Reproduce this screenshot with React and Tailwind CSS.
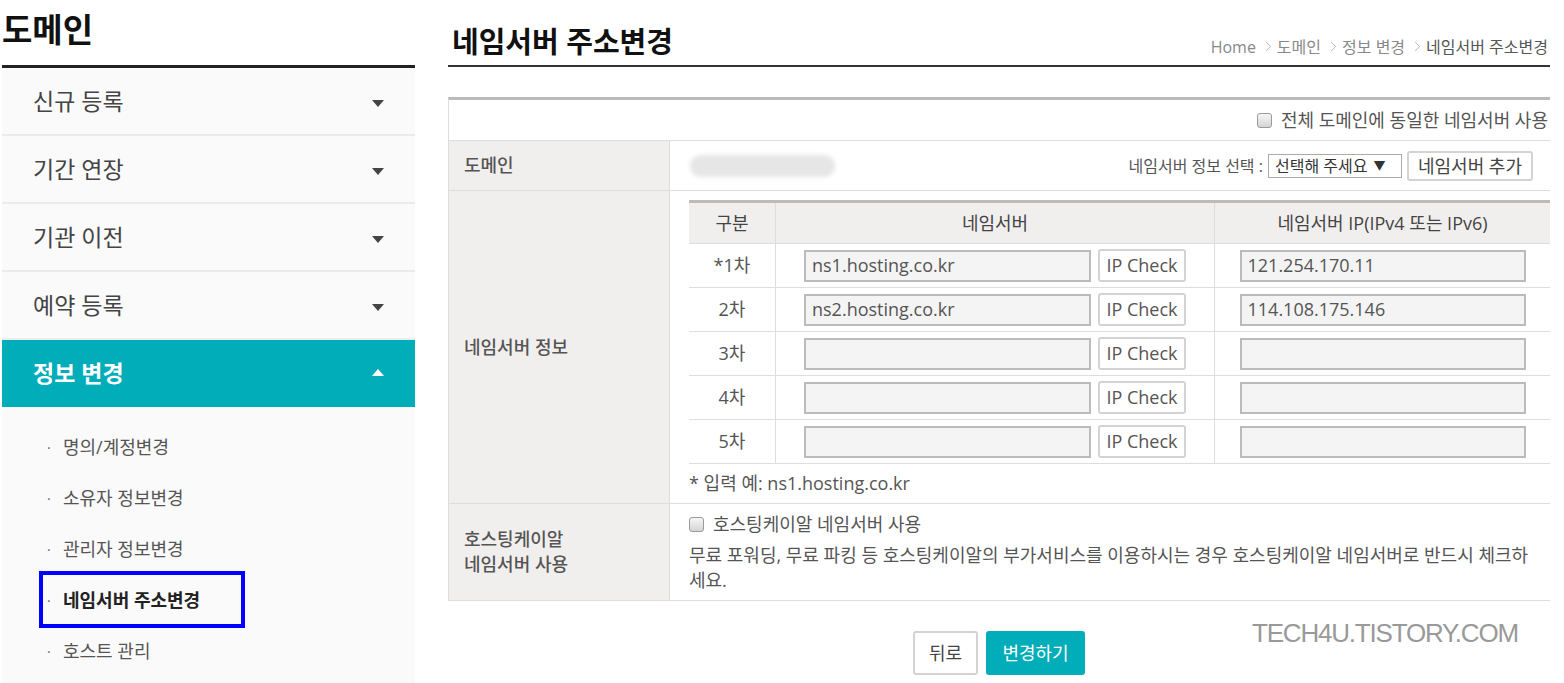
import { ChevronRight } from "lucide-react";

const menus = ["신규 등록", "기간 연장", "기관 이전", "예약 등록"];
const subMenus = ["명의/계정변경", "소유자 정보변경", "관리자 정보변경", "네임서버 주소변경", "호스트 관리"];

const rows = [
    { label: "*1차", ns: "ns1.hosting.co.kr", ip: "121.254.170.11" },
    { label: "2차", ns: "ns2.hosting.co.kr", ip: "114.108.175.146" },
    { label: "3차", ns: "", ip: "" },
    { label: "4차", ns: "", ip: "" },
    { label: "5차", ns: "", ip: "" },
];

function Checkbox() {
    return (
        <span className="inline-block w-[15px] h-[15px] rounded-[3px] border border-[#9a9a9a] bg-linear-to-b from-[#f6f6f6] to-[#d5d5d5]" />
    );
}

function Sidebar() {
    return (
        <aside className="ml-[2px] w-[413px] flex flex-col h-[683px]">
            {/* Title */}
            <div className="h-[68px] border-b-[3px] border-[#222] pt-[13px]">
                <h2 className="text-[33px] leading-none font-bold text-[#111]">도메인</h2>
            </div>

            {menus.map((m) => (
                <div
                    key={m}
                    className="h-[68px] border-b-2 border-[#ebebeb] bg-[#fafafa] flex items-center justify-between pl-[31px] pr-[31px]"
                >
                    <span className="text-[23px] text-[#444]">{m}</span>
                    <svg width="12" height="7" viewBox="0 0 12 7" className="mt-[4px]">
                        <path d="M0 0h12L6 7z" fill="#444" />
                    </svg>
                </div>
            ))}

            {/* Active menu */}
            <div className="h-[67px] bg-[#00adb9] flex items-center justify-between pl-[31px] pr-[31px]">
                <span className="text-[23px] font-bold text-white">정보 변경</span>
                <svg width="12" height="7" viewBox="0 0 12 7" className="-mt-[2px]">
                    <path d="M0 7h12L6 0z" fill="#fff" />
                </svg>
            </div>

            {/* Sub menu */}
            <div className="flex-1 bg-[#fafafa] pt-[15px]">
                {subMenus.map((s, i) => (
                    <div key={s} className="relative h-[51px] flex items-center pl-[45px]">
                        <span className="w-[16px] text-[14px] text-[#666]">·</span>
                        <span className={`text-[18px] ${i === 3 ? "font-bold text-[#222]" : "text-[#555]"}`}>
                            {s}
                        </span>
                        {i === 3 && (
                            <span className="absolute left-[37px] -top-[4px] w-[206px] h-[57px] border-4 border-[#0000ff]" />
                        )}
                    </div>
                ))}
            </div>
        </aside>
    );
}

export default function App() {
    return (
        <div className="flex bg-white w-[1564px] h-[683px] overflow-hidden font-['Open_Sans','Noto_Sans_CJK_KR',sans-serif]">
            <Sidebar />

            <main className="relative ml-[33px] w-[1102px]">
                {/* Header */}
                <div className="h-[67px] border-b-2 border-[#333] flex items-end justify-between">
                    <h1 className="text-[29px] leading-none font-semibold text-[#111] pb-[9px] pl-[4px]">
                        네임서버 주소변경
                    </h1>
                    <div className="flex items-center text-[16px] leading-none text-[#888] pb-[10px] pr-[2px]">
                        <span>Home</span>
                        <ChevronRight size={17} strokeWidth={1} className="ml-[4px] text-[#999]" />
                        <span>도메인</span>
                        <ChevronRight size={17} strokeWidth={1} className="ml-[4px] text-[#999]" />
                        <span>정보 변경</span>
                        <ChevronRight size={17} strokeWidth={1} className="ml-[4px] text-[#999]" />
                        <span className="text-[#555]">네임서버 주소변경</span>
                    </div>
                </div>

                {/* Form table */}
                <div className="mt-[30px] border-t-[3px] border-[#bbb] border-l border-l-[#ddd]">
                    {/* all domains */}
                    <div className="h-[41px] border-b border-[#ddd] flex items-center justify-end gap-[9px] pr-[2px] text-[18px] text-[#555]">
                        <Checkbox />
                        <span>전체 도메인에 동일한 네임서버 사용</span>
                    </div>

                    {/* domain */}
                    <div className="h-[50px] border-b border-[#ddd] flex">
                        <div className="w-[221px] bg-[#f1efee] border-r border-[#ddd] flex items-center pl-[15px] text-[18px] font-medium text-[#555]">
                            도메인
                        </div>
                        <div className="flex-1 flex items-center justify-between pl-[20px] pr-[17px]">
                            <div className="w-[145px] h-[22px] rounded-full bg-[#e6e6e6] blur-[2px]" />
                            <div className="flex items-center text-[16px] text-[#555]">
                                <span>네임서버 정보 선택 :</span>
                                <div className="ml-[5px] h-[24px] w-[134px] border border-[#aaa] flex items-center pl-[6px] text-[#333]">
                                    선택해 주세요 <span className="ml-[6px] text-[12px]">▼</span>
                                </div>
                                <button className="ml-[5px] h-[30px] px-[9px] border-2 border-[#d3d3d3] rounded-[3px] bg-white text-[18px] text-[#444]">
                                    네임서버 추가
                                </button>
                            </div>
                        </div>
                    </div>

                    {/* nameservers */}
                    <div className="h-[313px] border-b border-[#ddd] flex">
                        <div className="w-[221px] bg-[#f1efee] border-r border-[#ddd] flex items-center pl-[15px] text-[18px] font-medium text-[#555]">
                            네임서버 정보
                        </div>
                        <div className="flex-1 pl-[19px] pt-[9px]">
                            <div className="border-t-[3px] border-[#bbb] text-[18px] text-[#555]">
                                <div className="h-[41px] flex bg-[#f1efee] border-b border-[#ddd] text-[#444]">
                                    <div className="w-[87px] flex items-center justify-center border-r border-[#ddd]">구분</div>
                                    <div className="w-[439px] flex items-center justify-center border-r border-[#ddd]">네임서버</div>
                                    <div className="flex-1 flex items-center justify-center">네임서버 IP(IPv4 또는 IPv6)</div>
                                </div>
                                {rows.map((r) => (
                                    <div key={r.label} className="h-[44px] flex border-b border-[#ddd]">
                                        <div className="w-[87px] flex items-center justify-center border-r border-[#ddd]">
                                            {r.label}
                                        </div>
                                        <div className="w-[439px] flex items-center justify-center gap-[7px] border-r border-[#ddd]">
                                            <div className="w-[287px] h-[32px] border-2 border-[#bbb] bg-[#f4f4f4] flex items-center pl-[6px]">
                                                {r.ns}
                                            </div>
                                            <button className="w-[88px] h-[33px] border-2 border-[#d3d3d3] rounded-[3px] bg-white text-[#555]">
                                                IP Check
                                            </button>
                                        </div>
                                        <div className="flex-1 flex items-center justify-center">
                                            <div className="w-[286px] h-[32px] border-2 border-[#bbb] bg-[#f4f4f4] flex items-center pl-[6px]">
                                                {r.ip}
                                            </div>
                                        </div>
                                    </div>
                                ))}
                                <div className="h-[39px] flex items-center">* 입력 예: ns1.hosting.co.kr</div>
                            </div>
                        </div>
                    </div>

                    {/* hosting.kr ns */}
                    <div className="h-[97px] border-b border-[#ddd] flex">
                        <div className="w-[221px] bg-[#f1efee] border-r border-[#ddd] flex items-center pl-[15px] text-[18px] font-medium text-[#555] leading-[25px]">
                            호스팅케이알
                            <br />
                            네임서버 사용
                        </div>
                        <div className="flex-1 pl-[19px] pr-[12px] pt-[8px] text-[18px] text-[#555] leading-[25px]">
                            <div className="flex items-center gap-[9px]">
                                <Checkbox />
                                <span>호스팅케이알 네임서버 사용</span>
                            </div>
                            <p className="mt-[6px]">
                                무료 포워딩, 무료 파킹 등 호스팅케이알의 부가서비스를 이용하시는 경우 호스팅케이알 네임서버로 반드시 체크하세요.
                            </p>
                        </div>
                    </div>
                </div>

                {/* Buttons */}
                <div className="mt-[30px] flex justify-center gap-[8px]">
                    <button className="w-[65px] h-[44px] border-2 border-[#d3d3d3] rounded-[3px] bg-white text-[18px] text-[#444]">
                        뒤로
                    </button>
                    <button className="w-[99px] h-[44px] rounded-[3px] bg-[#00adb9] text-[18px] text-white">
                        변경하기
                    </button>
                </div>

                {/* watermark */}
                <span className="absolute left-[804px] top-[614px] font-['Liberation_Sans',sans-serif] text-[26px] tracking-[-1.2px] text-[#999]">
                    TECH4U.TISTORY.COM
                </span>
            </main>
        </div>
    );
}
